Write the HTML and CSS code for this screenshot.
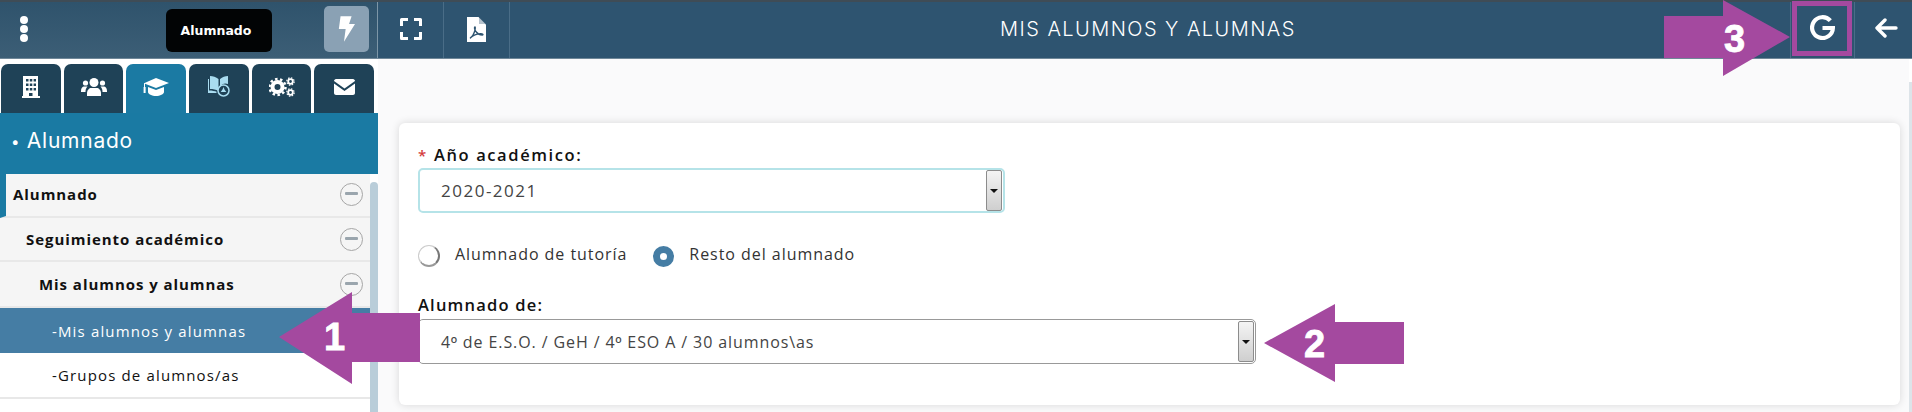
FILE: index.html
```html
<!DOCTYPE html>
<html lang="es">
<head>
    <meta charset="UTF-8">
    <title>Mis alumnos y alumnas</title>
    <link rel="stylesheet" href="styles.css">
</head>
<body>
    <div class="app">
        <!-- Top bar -->
        <header class="topbar">
            <div class="topbar-side">
                <span class="dots"><i></i><i></i><i></i></span>
                <span class="profile-pill">Alumnado</span>
                <span class="bolt-btn">
                    <svg viewBox="0 0 20 30" width="17" height="26"><path fill="#fff" d="M3 0h13l-3 9h7L7 30l2-15H1z"/></svg>
                </span>
            </div>
            <div class="topbar-main">
                <span class="bar-btn">
                    <svg viewBox="0 0 22 22" width="22" height="22" fill="none" stroke="#fff" stroke-width="3" stroke-linejoin="round"><path d="M8 1.500H1.500V8M14 1.500h6.500V8M8 20.500H1.500V14M14 20.500h6.500V14"/></svg>
                </span>
                <span class="bar-btn">
                    <svg viewBox="0 0 19 25" width="19" height="25"><path fill="#fff" d="M0 0h11.500L19 7.500V25H0z"/><path fill="#2e5470" d="M12 0l7 7h-7z" opacity=".35"/><path fill="none" stroke="#2e5470" stroke-width="1.300" d="M3 21c2-1 4-4 5-8 .5-2 .3-3.500-.2-3-.6.8 0 3 1.500 5 1.500 2 4 3 6 3 1.500 0 .5-1.500-2-1.300-3 .2-7 1.600-10 4.300z"/></svg>
                </span>
                <h1 class="page-title">Mis alumnos y alumnas</h1>
                <span class="bar-btn bar-btn-g">
                    <svg viewBox="0 0 24 24" width="25" height="25" fill="none" stroke="#fff" stroke-width="4"><path d="M19.500 5.500A10 10 0 1 0 22 12.500H12"/></svg>
                </span>
                <span class="bar-btn bar-btn-back">
                    <svg viewBox="0 0 24 20" width="24" height="20" fill="none" stroke="#fff" stroke-width="3.400" stroke-linecap="round" stroke-linejoin="round"><path d="M22 10H3M11 2l-8 8 8 8"/></svg>
                </span>
            </div>
        </header>

        <div class="content">
            <!-- Left menu -->
            <aside class="sidebar">
                <nav class="tabs">
                    <span class="tab">
                        <svg viewBox="0 0 18 22" width="18" height="22"><path fill="#fff" fill-rule="evenodd" d="M1 0h15v20h2v2H0v-2h1zM4 3v2.500h2.500V3zm3.800 0v2.500h2.500V3zm3.800 0v2.500H14V3zM4 7.500V10h2.500V7.500zm3.800 0V10h2.500V7.500zm3.800 0V10H14V7.500zM4 12v2.500h2.500V12zm3.800 0v2.500h2.500V12zm3.800 0v2.500H14V12zM7 17v3h3.500v-3z"/></svg>
                    </span>
                    <span class="tab">
                        <svg viewBox="0 0 26 18" width="26" height="18" fill="#fff"><circle cx="13" cy="4.500" r="4.500"/><circle cx="4.500" cy="5" r="2.600"/><circle cx="21.500" cy="5" r="2.600"/><path d="M6 18v-3c0-3 2.500-5 4-5h6c1.500 0 4 2 4 5v3z"/><path d="M0 13c0-3 1.500-4.500 3-4.500h3.500C5 10 4.500 11.500 4.500 14H0zM26 13c0-3-1.500-4.500-3-4.500h-3.500c1.500 1.500 2 3 2 5.500H26z"/></svg>
                    </span>
                    <span class="tab tab-active">
                        <svg viewBox="0 0 26 18" width="26" height="18" fill="#fff"><path d="M13 0l13 5-13 5L2 5.800V9H1V5.300z"/><path d="M5 9l8 3 8-3v5c0 2-4 4-8 4s-8-2-8-4z"/><rect x=".6" y="9" width="2" height="6"/></svg>
                    </span>
                    <span class="tab">
                        <svg viewBox="0 0 22 21" width="22" height="21"><path fill="#a9dcf0" d="M2 0c3 0 6 1 8.500 3v12C8 13.500 5 13 2 13zM20 0v8a7 7 0 0 0-8 3V3c2.500-2 5-3 8-3zM0 3h1v11.500c3 0 6 .5 8 1.500h-.5v1H0z"/><circle cx="15.500" cy="14.500" r="5.500" fill="#1f4257" stroke="#a9dcf0" stroke-width="1.500"/><path fill="#a9dcf0" d="M15.500 11l1 2.500 1.800 2.500h-5.600l1.800-2.500z"/></svg>
                    </span>
                    <span class="tab">
                        <svg viewBox="0 0 26 20" width="26" height="20" fill="none" stroke="#fff"><circle cx="8.500" cy="10" r="5" stroke-width="4"/><circle cx="8.500" cy="10" r="8" stroke-width="2.500" stroke-dasharray="2.500 2.500"/><circle cx="21.500" cy="4.500" r="2.300" stroke-width="1.800"/><circle cx="21.500" cy="15.500" r="2.300" stroke-width="1.800"/><circle cx="21.500" cy="4.500" r="3.700" stroke-width="1.200" stroke-dasharray="1.500 1.400"/><circle cx="21.500" cy="15.500" r="3.700" stroke-width="1.200" stroke-dasharray="1.500 1.400"/></svg>
                    </span>
                    <span class="tab">
                        <svg viewBox="0 0 21 16" width="21" height="16" fill="#fff"><path d="M2 0h17c1 0 2 1 2 2l-10.500 7.500L0 2c0-1 1-2 2-2z"/><path d="M0 4.500l10.500 7.500L21 4.500V14c0 1-1 2-2 2H2c-1 0-2-1-2-2z"/></svg>
                    </span>
                </nav>
                <div class="section-title"><small>&bull;</small> Alumnado</div>
                <div class="menu">
                    <ul class="menu-list">
                        <li class="menu-item menu-item-root"><span>Alumnado</span><i class="collapse"></i></li>
                        <li class="menu-item level-1"><span>Seguimiento académico</span><i class="collapse"></i></li>
                        <li class="menu-item level-2"><span>Mis alumnos y alumnas</span><i class="collapse"></i></li>
                        <li class="menu-item level-3 selected"><span>-Mis alumnos y alumnas</span></li>
                        <li class="menu-item level-3"><span>-Grupos de alumnos/as</span></li>
                    </ul>
                    <div class="menu-scroll"></div>
                </div>
            </aside>

            <!-- Main form -->
            <main class="main">
                <section class="card">
                    <label class="field-label field-label-req"><em>*</em>Año académico:</label>
                    <div class="select select-focus">
                        <span>2020-2021</span>
                        <b class="select-btn"></b>
                    </div>
                    <div class="radios">
                        <span class="radio"></span>
                        <span class="radio-text">Alumnado de tutoría</span>
                        <span class="radio radio-on"></span>
                        <span class="radio-text">Resto del alumnado</span>
                    </div>
                    <label class="field-label">Alumnado de:</label>
                    <div class="select select-wide">
                        <span>4<span class="ord">º</span> de E.S.O. / GeH / 4<span class="ord">º</span> ESO A / 30 alumnos\as</span>
                        <b class="select-btn"></b>
                    </div>
                </section>
            </main>
            <div class="page-scroll"></div>
        </div>
    </div>

    <!-- Annotations over the screenshot -->
    <svg class="mark mark-1" viewBox="0 0 141 92" width="141" height="92">
        <path d="M0 45L73 0v21h68v49H73v22z"/><text x="45" y="58">1</text>
    </svg>
    <svg class="mark mark-2" viewBox="0 0 140 78" width="140" height="78">
        <path d="M0 39L71 0v18h69v42H71v18z"/><text x="40" y="53">2</text>
    </svg>
    <svg class="mark mark-3" viewBox="0 0 126 76" width="126" height="76">
        <path d="M126 37L59 0v16H0v42h59v18z"/><text x="60" y="52">3</text>
    </svg>
    <div class="mark-box"></div>
</body>
</html>
```

FILE: styles.css
```css
* {
    box-sizing: border-box;
    margin: 0;
    padding: 0;
}

html, body {
    height: 412px;
    overflow: hidden;
}

body {
    font-family: "Open Sans", Arial, sans-serif;
    background-color: white;
    color: #111;
    position: relative;
}

.app {
    display: flex;
    flex-direction: column;
    height: 412px;
}

/* Top bar */
.topbar {
    display: flex;
    height: 59px;
    flex-shrink: 0;
    border-top: 2px solid #3f4c56;
    border-bottom: 1px solid #6f8798;
}

.topbar-side {
    width: 378px;
    display: flex;
    align-items: center;
    background: linear-gradient(#2f536c, #3c5e76);
    border-right: 1px solid #7d96a7;
    padding: 0 8px 3px 18px;
}

.dots {
    display: flex;
    flex-direction: column;
    gap: 1px;
    width: 12px;
}

.dots i {
    display: block;
    width: 8px;
    height: 8px;
    border-radius: 50%;
    background: white;
    margin-left: 2px;
}

.profile-pill {
    width: 106px;
    height: 43px;
    margin-left: 136px;
    margin-top: 4px;
    background: #020405;
    border-radius: 6px;
    color: white;
    font-family: "DejaVu Sans", sans-serif;
    font-size: 12.5px;
    font-weight: bold;
    display: flex;
    align-items: center;
    justify-content: center;
    padding-right: 6px;
}

.bolt-btn {
    width: 45px;
    height: 46px;
    margin-left: auto;
    background: #8aa1b4;
    border-radius: 5px;
    display: flex;
    align-items: center;
    justify-content: center;
}

.topbar-main {
    flex: 1;
    display: flex;
    align-items: stretch;
    background: #2e5470;
    color: white;
}

.bar-btn {
    width: 66px;
    border-right: 1px solid #4a6d87;
    display: flex;
    align-items: center;
    justify-content: center;
    padding-bottom: 2px;
}

.page-title {
    flex: 1;
    text-align: center;
    text-transform: uppercase;
    font-family: "Inter", sans-serif;
    font-size: 20px;
    font-weight: 300;
    line-height: 54px;
    letter-spacing: 1.450px;
    padding-right: 4px;
}

.bar-btn-g {
    border-left: 1px solid #4a6d87;
    width: 65px;
    padding-bottom: 6px;
}

.bar-btn-back {
    width: 57px;
    border-right: none;
    padding: 0 0 4px 5px;
}

/* Sidebar */
.content {
    flex: 1;
    display: flex;
    min-height: 0;
}

.sidebar {
    width: 378px;
    flex-shrink: 0;
    background: white;
    display: flex;
    flex-direction: column;
}

.tabs {
    display: flex;
    gap: 3px;
    padding: 5px 4px 0 1px;
    height: 54px;
}

.tab {
    flex: 1;
    background: #1f4257;
    border-radius: 7px 7px 0 0;
    display: flex;
    align-items: center;
    justify-content: center;
    padding-bottom: 4px;
}

.tab-active {
    background: #1b7aa3;
}

.section-title {
    height: 61px;
    background: #1a7aa3;
    color: white;
    font-family: "Inter", sans-serif;
    font-size: 21px;
    line-height: 56px;
    padding-left: 11px;
    letter-spacing: 0.750px;
}

.section-title small {
    font-size: 15px;
    vertical-align: 1px;
}

.menu {
    flex: 1;
    display: flex;
}

.menu-list {
    flex: 1;
    list-style: none;
}

.menu-item {
    height: 45px;
    display: flex;
    align-items: center;
    justify-content: space-between;
    padding-right: 7px;
    background: #f5f5f5;
    border-bottom: 2px solid #e8e8e8;
    font-size: 15px;
    font-weight: bold;
    letter-spacing: 0.950px;
}

.menu-item-root {
    height: 44px;
    border-left: 6px solid #1a7aa3;
    padding-left: 7px;
    padding-bottom: 2px;
}

.level-1 {
    padding-left: 26px;
    height: 44px;
}

.level-2 {
    padding-left: 39px;
    height: 46px;
}

.level-3 {
    padding-left: 52px;
    background: white;
    font-weight: normal;
    height: 46px;
    letter-spacing: 1.150px;
}

.selected {
    background: #457da4;
    color: white;
    border-bottom: none;
    height: 45px;
}

.collapse {
    width: 23px;
    height: 23px;
    border: 1.500px solid #a6a6a6;
    border-radius: 50%;
    position: relative;
}

.collapse::after {
    content: "";
    position: absolute;
    left: 4px;
    right: 4px;
    top: 8px;
    height: 3px;
    background: #9aa5ad;
    border-radius: 1px;
}

.menu-scroll {
    width: 8px;
    background: #b9cdd9;
    border-radius: 4px 4px 0 0;
    margin-top: 8px;
}

/* Main */
.main {
    flex: 1;
    background: #fafafb;
    padding: 64px 9px 7px 21px;
}

.page-scroll {
    width: 3px;
    margin-top: 23px;
    background: #dde4e9;
}

.card {
    height: 282px;
    background: white;
    border-radius: 6px;
    box-shadow: 0 0 8px rgba(0, 0, 0, 0.14);
    padding: 20px 19px;
}

.field-label {
    display: block;
    font-size: 16.500px;
    font-weight: 600;
    letter-spacing: 1.200px;
    line-height: 24px;
}

.field-label-req {
    letter-spacing: 1.600px;
}

.field-label em {
    display: inline-block;
    width: 16px;
    color: #d43c3c;
    font-style: normal;
    font-size: 15px;
}

.select {
    width: 587px;
    height: 45px;
    margin-top: 1px;
    border: 2px solid #b5e3e8;
    border-radius: 5px;
    display: flex;
    align-items: center;
    justify-content: space-between;
    padding: 0 1px 1px 21px;
    font-size: 17px;
    color: #444;
    letter-spacing: 1.500px;
}

.select-wide {
    width: 838px;
    border: 1px solid #999;
    padding: 0 1px 0 22px;
    margin-top: 2px;
    font-size: 16px;
    letter-spacing: 0.900px;
}

.ord {
    font-family: "Liberation Sans", Arial, sans-serif;
}

.select-btn {
    width: 16px;
    height: 41px;
    background: linear-gradient(#f4f4f4, #cfcfcf);
    border: 1px solid #8c8c8c;
    border-radius: 2px;
    position: relative;
}

.select-btn::after {
    content: "";
    position: absolute;
    left: 3px;
    top: 18px;
    border-left: 4px solid transparent;
    border-right: 4px solid transparent;
    border-top: 4px solid #111;
}

.radios {
    display: flex;
    align-items: center;
    height: 28px;
    margin-top: 29px;
    margin-bottom: 23px;
    font-size: 16px;
    color: #333;
}

.radio {
    width: 22px;
    height: 22px;
    border: 1px solid #ccc;
    border-right: 2px solid #777;
    border-bottom: 2px solid #999;
    border-radius: 50%;
    background: white;
}

.radio-on {
    width: 21px;
    height: 21px;
    border: 7px solid #457da4;
    margin-left: 26px;
}

.radio-text {
    margin-left: 15px;
    letter-spacing: 0.950px;
    padding-bottom: 5px;
}

/* Annotations */
.mark {
    position: absolute;
}

.mark path {
    fill: #a4499f;
}

.mark text {
    fill: white;
    stroke: white;
    stroke-width: 0.800px;
    font-family: "Liberation Sans", Arial, sans-serif;
    font-size: 38px;
    font-weight: bold;
}

.mark-1 {
    left: 279px;
    top: 292px;
}

.mark-2 {
    left: 1264px;
    top: 304px;
}

.mark-3 {
    left: 1664px;
    top: 0;
}

.mark-box {
    position: absolute;
    left: 1792px;
    top: 1px;
    width: 60px;
    height: 55px;
    border: 5px solid #a4499f;
}
```
